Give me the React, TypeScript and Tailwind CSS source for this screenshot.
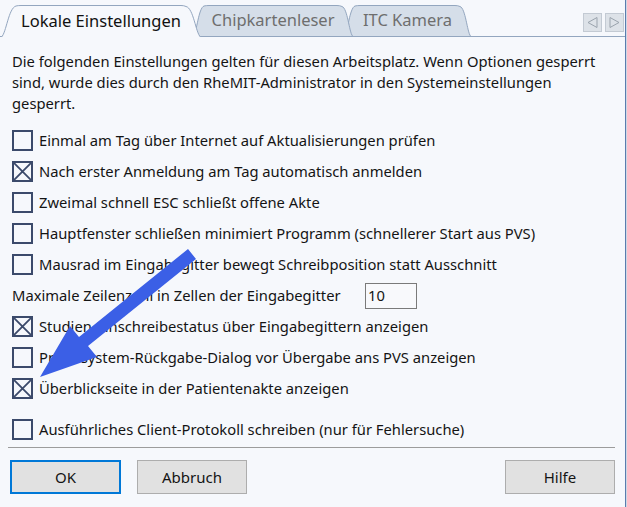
import React from 'react';

const font = "font-['Noto_Sans','Open_Sans',sans-serif]";

const Checkbox: React.FC<{ checked?: boolean }> = ({ checked }) => (
  <span className="relative block h-[21px] w-[21px] shrink-0 border-2 border-[#3b4a6b] bg-[#f6f8fc]">
    {checked && (
      <svg className="absolute inset-0 h-full w-full" viewBox="0 0 17 17">
        <path d="M0 0 L17 17 M17 0 L0 17" stroke="#3b4a6b" strokeWidth="1.8" />
      </svg>
    )}
  </span>
);

const Option: React.FC<{ label: string; checked?: boolean }> = ({ label, checked }) => (
  <div className="flex h-[31px] items-center gap-[6px]">
    <Checkbox checked={checked} />
    <span>{label}</span>
  </div>
);

const Tab: React.FC<{
  label: string;
  width: number;
  slant: number;
  active?: boolean;
  className?: string;
}> = ({ label, width, slant, active, className }) => {
  const h = active ? 32 : 31;
  const w = width;
  const s = slant;
  const d = `M0.5 ${h} C${s * 0.35} ${h - 4} ${s * 0.5} 3 ${s} 1 Q${s + 2} 0.5 ${s + 5} 0.5 L${w - s - 5} 0.5 Q${w - s - 2} 0.5 ${w - s} 1.5 C${w - s * 0.5} 3 ${w - s * 0.35} ${h - 4} ${w - 0.5} ${h}`;
  return (
    <div
      className={`relative flex shrink-0 items-center justify-center ${className ?? ''}`}
      style={{ width: w, height: h }}
    >
      <svg className="absolute inset-0" width={w} height={h} viewBox={`0 0 ${w} ${h}`}>
        <path d={d + (active ? ` L${w} ${h + 1} L0 ${h + 1} Z` : ' Z')} fill={active ? '#f6f8fc' : '#d5dee9'} stroke="none" />
        <path d={d} fill="none" stroke="#93a6bf" strokeWidth="1" />
      </svg>
      <span
        className={`relative text-[16.5px] ${active ? 'text-[#111111] pt-[1px]' : 'text-[#6e6e6e]'}`}
      >
        {label}
      </span>
    </div>
  );
};

const ScrollButton: React.FC<{ dir: 'left' | 'right' }> = ({ dir }) => (
  <div className="flex h-[19px] w-[19px] items-center justify-center border border-[#c3cad3] bg-[#dde2e8]">
    <svg width="13" height="13" viewBox="0 0 13 13">
      {dir === 'left' ? (
        <path d="M11 1.5 L2 6.5 L11 11.5 Z" fill="none" stroke="#9aa3ad" strokeWidth="1" />
      ) : (
        <path d="M2 1.5 L11 6.5 L2 11.5 Z" fill="none" stroke="#9aa3ad" strokeWidth="1" />
      )}
    </svg>
  </div>
);

const App: React.FC = () => {
  return (
    <div className={`flex h-[507px] w-[627px] bg-[#cfd8e4] ${font}`}>
      <div className="relative flex w-[626px] flex-col border-r border-[#5b7cae] bg-[#f6f8fc] text-[14.75px] text-[#141414]">
        {/* tab strip */}
        <div className="flex h-[37px] items-end border-b border-[#93a6bf] pl-[1px]">
          <Tab label="Lokale Einstellungen" width={200} slant={15} active className="z-20 mb-[-1px]" />
          <Tab label="Chipkartenleser" width={160} slant={11} className="z-10 ml-[-8px]" />
          <Tab label="ITC Kamera" width={127} slant={11} className="ml-[-9px]" />
          <div className="mb-[4px] ml-auto mr-[1px] flex gap-[3px]">
            <ScrollButton dir="left" />
            <ScrollButton dir="right" />
          </div>
        </div>

        {/* content */}
        <div className="px-[12px] pt-[14px]">
          <p className="leading-[21px]">
            Die folgenden Einstellungen gelten für diesen Arbeitsplatz. Wenn Optionen gesperrt
            <br />
            sind, wurde dies durch den RheMIT-Administrator in den Systemeinstellungen
            <br />
            gesperrt.
          </p>
          <div className="mt-[11px] flex flex-col">
            <Option label="Einmal am Tag über Internet auf Aktualisierungen prüfen" />
            <Option label="Nach erster Anmeldung am Tag automatisch anmelden" checked />
            <Option label="Zweimal schnell ESC schließt offene Akte" />
            <Option label="Hauptfenster schließen minimiert Programm (schnellerer Start aus PVS)" />
            <Option label="Mausrad im Eingabegitter bewegt Schreibposition statt Ausschnitt" />
            <div className="flex h-[31px] items-center">
              <span className="w-[353px]">Maximale Zeilenzahl in Zellen der Eingabegitter</span>
              <div className="flex h-[26px] w-[52px] items-center border border-[#7a7a7a] bg-[#f8f9fc] pl-[2px]">
                10
              </div>
            </div>
            <Option label="Studien-Einschreibestatus über Eingabegittern anzeigen" checked />
            <Option label="Praxissystem-Rückgabe-Dialog vor Übergabe ans PVS anzeigen" />
            <Option label="Überblickseite in der Patientenakte anzeigen" checked />
            <div className="mt-[10px]">
              <Option label="Ausführliches Client-Protokoll schreiben (nur für Fehlersuche)" />
            </div>
          </div>
        </div>

        <div className="mx-[8px] mt-[2px] mr-[10px] h-px bg-[#9c9c9c]" />

        <div className="mt-[12px] flex px-[10px] pr-[10px]">
          <button className="h-[34px] w-[111px] border-2 border-[#0078d7] bg-[#e1e1e1] text-[15px] text-[#141414]">
            OK
          </button>
          <button className="ml-[16px] h-[34px] w-[110px] border border-[#adadad] bg-[#e1e1e1] text-[15px] text-[#141414]">
            Abbruch
          </button>
          <button className="ml-auto h-[34px] w-[110px] border border-[#adadad] bg-[#e1e1e1] text-[15px] text-[#141414]">
            Hilfe
          </button>
        </div>

        {/* annotation arrow */}
        <svg className="pointer-events-none absolute left-0 top-0" width="626" height="507">
          <polygon
            points="188,249 196,259 88,346 97,357 40,377 70,326 79,337"
            fill="#3b5fe6"
          />
        </svg>
      </div>
    </div>
  );
};

export default App;
